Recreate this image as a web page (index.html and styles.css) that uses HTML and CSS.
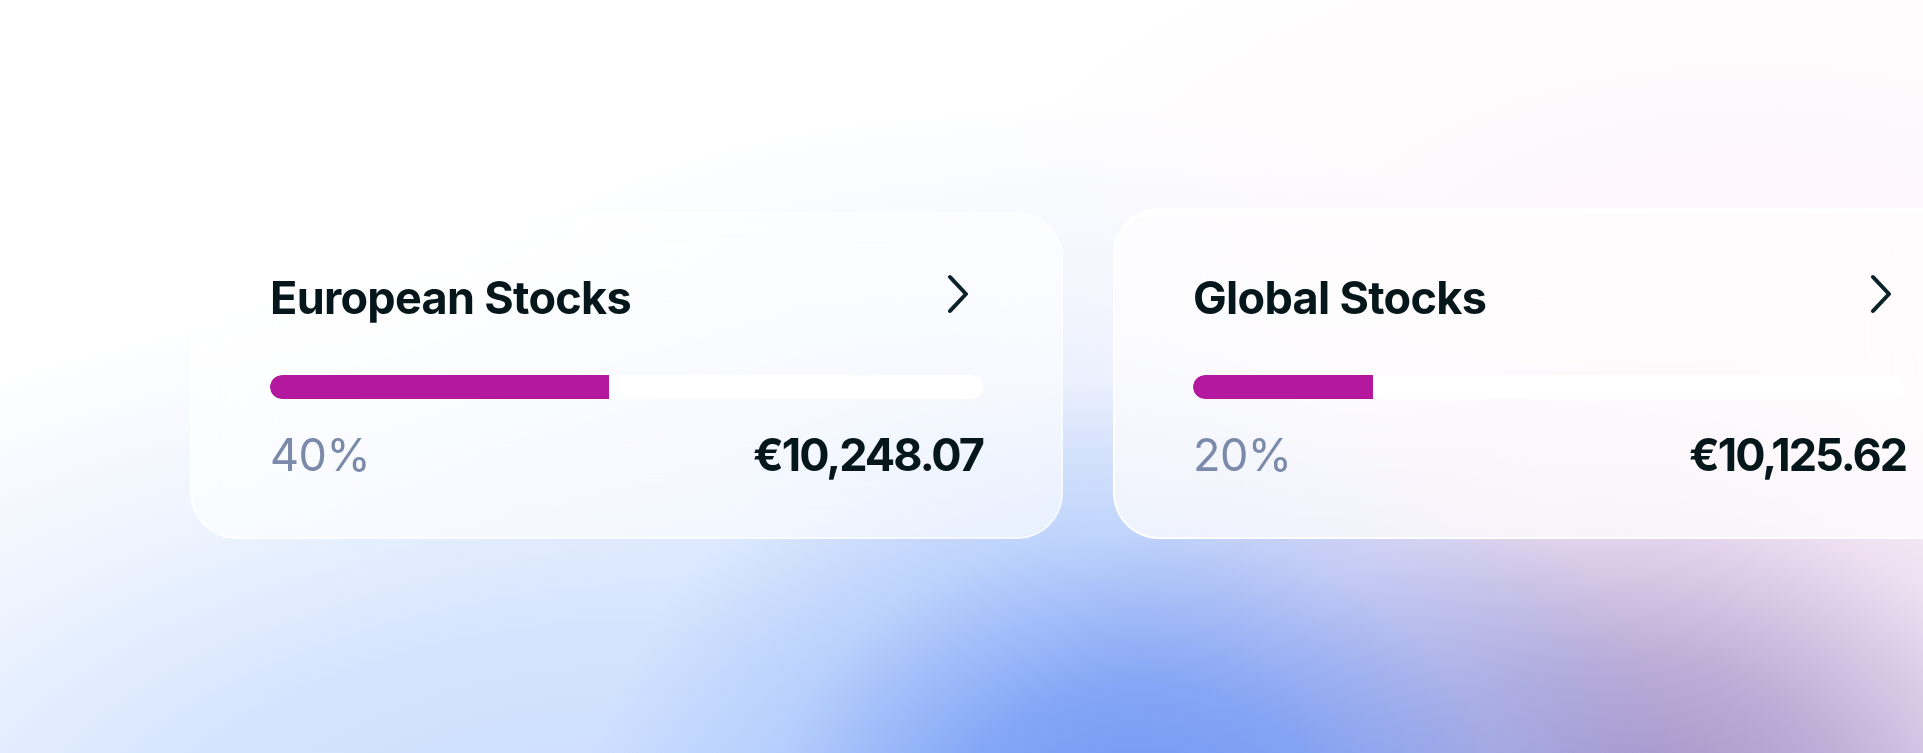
FILE: index.html
```html
<!DOCTYPE html>
<html lang="en">
<head>
<meta charset="utf-8">
<title>Portfolio</title>
<link rel="stylesheet" href="styles.css">
</head>
<body>
<div class="page">
  <div class="cards">
    <div class="card">
      <div class="card-head">
        <h2 class="card-title">European Stocks</h2>
        <svg class="chev" width="48" height="48" viewBox="0 0 48 48" aria-hidden="true"><path d="M15 4 L31 21 L15 38" fill="none" stroke="#0b2328" stroke-width="4" stroke-linecap="round" stroke-linejoin="round"/></svg>
      </div>
      <div class="bar"><div class="bar-fill" style="width:47.5%"></div></div>
      <div class="card-foot">
        <span class="pct">40%</span>
        <span class="amount">€10,248.07</span>
      </div>
    </div>
    <div class="card card-raised">
      <div class="card-head">
        <h2 class="card-title">Global Stocks</h2>
        <svg class="chev" width="48" height="48" viewBox="0 0 48 48" aria-hidden="true"><path d="M15 4 L31 21 L15 38" fill="none" stroke="#0b2328" stroke-width="4" stroke-linecap="round" stroke-linejoin="round"/></svg>
      </div>
      <div class="bar"><div class="bar-fill" style="width:25.2%"></div></div>
      <div class="card-foot">
        <span class="pct">20%</span>
        <span class="amount">€10,125.62</span>
      </div>
    </div>
  </div>
</div>
</body>
</html>
```
FILE: styles.css
```css
html, body {
  margin: 0;
  padding: 0;
}
body {
  width: 1923px;
  height: 753px;
  overflow: hidden;
  font-family: "Inter", "Liberation Sans", sans-serif;
  color: #06171b;
  background:
    radial-gradient(ellipse 560px 470px at 1140px 850px, rgba(108,148,242,1) 0%, rgba(118,156,245,0.85) 35%, rgba(145,180,250,0.4) 68%, rgba(170,195,250,0) 100%),
    radial-gradient(ellipse 640px 480px at 1620px 830px, rgba(160,138,195,1) 0%, rgba(172,152,205,0.8) 35%, rgba(215,188,225,0.45) 68%, rgba(235,215,238,0) 100%),
    radial-gradient(ellipse 1150px 600px at 600px 880px, rgba(198,218,255,1) 0%, rgba(208,225,254,0.9) 40%, rgba(222,234,253,0.5) 70%, rgba(240,245,255,0) 100%),
    radial-gradient(ellipse 850px 450px at 1750px 300px, rgba(250,234,244,0.6) 0%, rgba(252,243,248,0.3) 60%, rgba(255,255,255,0) 100%),
    radial-gradient(ellipse 700px 420px at 1000px 520px, rgba(215,228,253,0.9) 0%, rgba(230,238,254,0.45) 60%, rgba(255,255,255,0) 100%),
    #ffffff;
}
.page {
  padding-top: 208px;
  padding-left: 190px;
}
.cards {
  display: flex;
  align-items: flex-end;
  gap: 50px;
}
.card {
  flex: 0 0 auto;
  width: 713px;
  padding: 59px 78px 60px;
  border: 2px solid rgba(255,255,255,0.55);
  border-radius: 46px;
  background: rgba(255,255,255,0.62);
  backdrop-filter: blur(40px);
  -webkit-backdrop-filter: blur(40px);
}
.card-raised {
  border-color: rgba(255,255,255,0.95);
  border-top-width: 6px;
  background: rgba(255,253,254,0.72);
}
.card-head {
  display: flex;
  align-items: center;
  justify-content: space-between;
  height: 48px;
}
.card-title {
  margin: 0;
  font-size: 45px;
  line-height: 45px;
  font-weight: 700;
  letter-spacing: -0.7px;
}
.chev {
  display: block;
  flex: 0 0 auto;
}
.bar {
  margin-top: 54px;
  height: 24px;
  border-radius: 12px;
  background: #ffffff;
  overflow: hidden;
}
.bar-fill {
  height: 100%;
  background: #b4189e;
  border-radius: 12px 0 0 12px;
}
.card-foot {
  margin-top: 33px;
  display: flex;
  justify-content: space-between;
  align-items: baseline;
  font-size: 45px;
  line-height: 45px;
}
.pct {
  color: #7b8aaa;
  font-weight: 400;
  letter-spacing: -0.5px;
}
.amount {
  font-weight: 700;
  letter-spacing: -2px;
}
```
